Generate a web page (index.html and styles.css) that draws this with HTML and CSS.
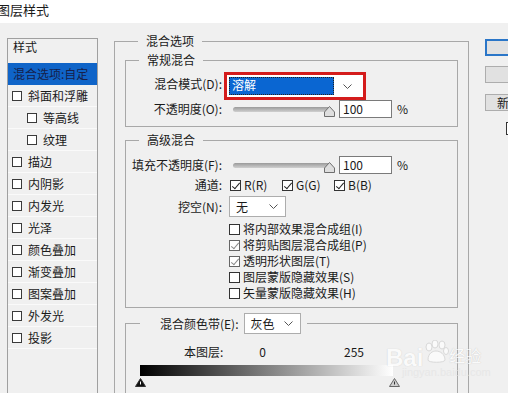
FILE: index.html
```html
<!DOCTYPE html>
<html lang="zh-CN">
<head>
    <meta charset="UTF-8">
    <title>图层样式</title>
    <link rel="stylesheet" href="styles.css">
</head>
<body>
    <div class="titlebar">图层样式</div>
    <div class="dialog">
        <div class="style-list">
            <div class="list-head">样式</div>
            <div class="list-item selected">混合选项:自定</div>
            <div class="list-item"><span class="box"></span>斜面和浮雕</div>
            <div class="list-item sub"><span class="box"></span>等高线</div>
            <div class="list-item sub"><span class="box"></span>纹理</div>
            <div class="list-item"><span class="box"></span>描边</div>
            <div class="list-item"><span class="box"></span>内阴影</div>
            <div class="list-item"><span class="box"></span>内发光</div>
            <div class="list-item"><span class="box"></span>光泽</div>
            <div class="list-item"><span class="box"></span>颜色叠加</div>
            <div class="list-item"><span class="box"></span>渐变叠加</div>
            <div class="list-item"><span class="box"></span>图案叠加</div>
            <div class="list-item"><span class="box"></span>外发光</div>
            <div class="list-item"><span class="box"></span>投影</div>
        </div>

        <fieldset class="group main">
            <legend>混合选项</legend>

            <fieldset class="group normal">
                <legend>常规混合</legend>
                <div class="row">
                    <span class="lbl">混合模式(D):</span>
                    <div class="mark">
                        <div class="select mode">
                            <span class="sel-active">溶解</span>
                            <svg class="chev" width="9" height="5" viewBox="0 0 9 5"><polyline points="0.5,0.5 4.5,4.5 8.5,0.5" fill="none" stroke="#555" stroke-width="1"/></svg>
                        </div>
                    </div>
                </div>
                <div class="row">
                    <span class="lbl">不透明度(O):</span>
                    <div class="slider">
                        <span class="track"></span>
                        <svg class="thumb" width="11" height="11" viewBox="0 0 11 11"><path d="M0.5 10.5 V6 L5.5 0.5 L10.5 6 V10.5 Z" fill="#dedede" stroke="#6e6e6e"/></svg>
                    </div>
                    <div class="num">100</div>
                    <span class="pct">%</span>
                </div>
            </fieldset>

            <fieldset class="group advanced">
                <legend>高级混合</legend>
                <div class="row fill">
                    <span class="lbl">填充不透明度(F):</span>
                    <div class="slider">
                        <span class="track"></span>
                        <svg class="thumb" width="11" height="11" viewBox="0 0 11 11"><path d="M0.5 10.5 V6 L5.5 0.5 L10.5 6 V10.5 Z" fill="#dedede" stroke="#6e6e6e"/></svg>
                    </div>
                    <div class="num">100</div>
                    <span class="pct">%</span>
                </div>
                <div class="row channels">
                    <span class="lbl">通道:</span>
                    <span class="chan first"><span class="cb on"></span>R(R)</span>
                    <span class="chan"><span class="cb on"></span>G(G)</span>
                    <span class="chan"><span class="cb on"></span>B(B)</span>
                </div>
                <div class="row knock">
                    <span class="lbl">挖空(N):</span>
                    <div class="select small">
                        <span class="sel-text">无</span>
                        <svg class="chev" width="9" height="5" viewBox="0 0 9 5"><polyline points="0.5,0.5 4.5,4.5 8.5,0.5" fill="none" stroke="#555" stroke-width="1"/></svg>
                    </div>
                </div>
                <div class="checks">
                    <div class="check"><span class="cb"></span>将内部效果混合成组(I)</div>
                    <div class="check"><span class="cb on grey"></span>将剪贴图层混合成组(P)</div>
                    <div class="check"><span class="cb on grey"></span>透明形状图层(T)</div>
                    <div class="check"><span class="cb"></span>图层蒙版隐藏效果(S)</div>
                    <div class="check"><span class="cb"></span>矢量蒙版隐藏效果(H)</div>
                </div>
            </fieldset>

            <fieldset class="group band">
                <legend>
                    <span class="band-label">混合颜色带(E):</span>
                    <span class="select small">
                        <span class="sel-text">灰色</span>
                        <svg class="chev" width="9" height="5" viewBox="0 0 9 5"><polyline points="0.5,0.5 4.5,4.5 8.5,0.5" fill="none" stroke="#555" stroke-width="1"/></svg>
                    </span>
                </legend>
                <div class="row layer">
                    <span class="layer-lbl">本图层:</span>
                    <span class="layer-min">0</span>
                    <span class="layer-max">255</span>
                </div>
                <div class="ramp"></div>
                <div class="ramp-thumbs">
                    <svg width="11" height="9" viewBox="0 0 11 9"><path d="M0.5 8.5 L5.5 0.5 L10.5 8.5 Z" fill="#111" stroke="#333"/><line x1="5.5" y1="3.5" x2="5.5" y2="6.5" stroke="#fff"/></svg>
                    <svg width="11" height="9" viewBox="0 0 11 9"><path d="M0.5 8.5 L5.5 0.5 L10.5 8.5 Z" fill="#cfcfcf" stroke="#666"/><line x1="5.5" y1="3.5" x2="5.5" y2="6.5" stroke="#333"/></svg>
                </div>
            </fieldset>
        </fieldset>

        <div class="buttons">
            <div class="btn default"></div>
            <div class="btn"></div>
            <div class="btn">新建样式(W)...</div>
            <span class="cb preview"></span>
        </div>
    </div>

    <div class="watermark">
        <span class="wm-bai">Bai</span><svg class="wm-paw" width="26" height="24" viewBox="0 0 26 24"><g fill="#fff" stroke="#cfcfcf"><ellipse cx="6" cy="7" rx="3" ry="4"/><ellipse cx="12" cy="4" rx="3" ry="4"/><ellipse cx="19" cy="5" rx="3" ry="4"/><ellipse cx="23" cy="11" rx="2.5" ry="3.5"/><path d="M5 20 C5 13 10 11 13 11 C17 11 22 14 22 20 C22 23 5 23 5 20 Z"/></g></svg><span class="wm-jy">经验</span>
        <div class="wm-url">jingyan.baidu.com</div>
    </div>
</body>
</html>
```

FILE: styles.css
```css
* {
    box-sizing: border-box;
}

body {
    margin: 0;
    width: 508px;
    height: 393px;
    overflow: hidden;
    position: relative;
    background-color: #f0f0f0;
    font-family: "Noto Sans CJK SC", "Microsoft YaHei", sans-serif;
    font-size: 12px;
    line-height: 16px;
    color: #1a1a1a;
}

.titlebar {
    height: 23px;
    background-color: #fff;
    font-size: 13px;
    line-height: 20px;
    text-indent: -3px;
}

.dialog {
    display: flex;
    align-items: flex-start;
    height: 370px;
    overflow: hidden;
    padding: 10px 0 0 7px;
}

/* left list of effects */
.style-list {
    flex: none;
    width: 91px;
    height: 356px;
    margin-top: 5px;
    border: 1px solid #a0a0a0;
}

.list-head {
    height: 24px;
    padding-left: 5px;
    line-height: 16px;
}

.list-item {
    display: flex;
    align-items: center;
    height: 22px;
    padding-left: 4px;
    border-bottom: 1px solid #fafafa;
    white-space: nowrap;
}

.list-item.sub {
    padding-left: 19px;
}

.list-item.selected {
    background-color: #0f64c8;
    color: #16204a;
    padding-left: 5px;
    border-bottom: none;
}

.box {
    width: 10px;
    height: 10px;
    margin-right: 6px;
    border: 1px solid #3a3a3a;
    background-color: #fff;
}

/* group boxes */
.group {
    margin: 0;
    padding: 0;
    min-width: 0;
    border: 1px solid #a8a8a8;
}

.group legend {
    margin-left: 13px;
    padding: 0 8px;
    line-height: 16px;
}

.main {
    flex: none;
    width: 355px;
    height: 362px;
    margin-left: 16px;
    padding: 3px 10px 0;
}

.normal {
    padding-bottom: 8px;
}

.advanced {
    margin-top: 5px;
    padding-bottom: 6px;
}

.band {
    margin-top: 5px;
    height: 120px;
}

.band legend {
    display: flex;
    align-items: center;
    margin-left: 14px;
    padding: 0 6px 0 20px;
}

.band-label {
    margin-right: 5px;
}

.row {
    display: flex;
    align-items: center;
    white-space: nowrap;
}

.lbl {
    width: 96px;
    text-align: right;
}

.mark {
    margin: 4px 0 0 2px;
    width: 142px;
    height: 28px;
    padding: 1px;
    border: 3px solid #d41c1c;
    background-color: #fff;
}

.select {
    display: flex;
    align-items: center;
    background-color: #fff;
    border: 1px solid #adadad;
}

.select.mode {
    height: 20px;
    border: none;
    padding: 1px;
}

.sel-active {
    flex: 1;
    height: 100%;
    padding-left: 3px;
    line-height: 16px;
    color: #fff;
    background-color: #0a66d2;
    outline: 1px dotted #222;
    outline-offset: -1px;
}

.select.mode .chev {
    margin: 0 9px 0 9px;
}

.select.small {
    width: 57px;
    height: 21px;
    padding-left: 6px;
}

.sel-text {
    flex: 1;
}

.select.small .chev {
    margin-right: 7px;
}

.slider {
    display: flex;
    align-items: center;
    margin-left: 11px;
}

.track {
    width: 97px;
    height: 5px;
    border-radius: 3px;
    background: linear-gradient(#9a9a9a, #d0d0d0);
}

.thumb {
    margin: 4px 0 0 -6px;
}

.num {
    width: 53px;
    height: 18px;
    margin-left: 4px;
    padding-left: 3px;
    line-height: 16px;
    background-color: #fff;
    border: 1px solid #7a7a7a;
}

.pct {
    margin-left: 5px;
}

.fill {
    margin-top: 8px;
}

.channels {
    margin-top: 3px;
}

.chan {
    display: flex;
    align-items: center;
    width: 52px;
}

.chan.first {
    margin-left: 8px;
}

.cb {
    position: relative;
    flex: none;
    width: 11px;
    height: 11px;
    margin-right: 3px;
    border: 1px solid #333;
    background-color: #fff;
}

.cb.on::after {
    content: "";
    position: absolute;
    left: 3px;
    top: 0;
    width: 3px;
    height: 7px;
    border: solid #222;
    border-width: 0 1px 1px 0;
    transform: rotate(40deg);
}

.cb.grey {
    border-color: #666;
}

.cb.grey::after {
    border-color: #8a8a8a;
}

.knock {
    margin-top: 3px;
}

.knock .select {
    margin-left: 7px;
}

.checks {
    margin: 4px 0 0 103px;
}

.check {
    display: flex;
    align-items: center;
    height: 16px;
    white-space: nowrap;
}

.layer {
    margin-top: 10px;
}

.layer-lbl {
    margin-left: 58px;
}

.layer-min {
    margin-left: 36px;
}

.layer-max {
    margin-left: 78px;
}

.ramp {
    width: 253px;
    height: 11px;
    margin: 5px 0 0 14px;
    background: linear-gradient(to right, #000, #fff);
}

.ramp-thumbs {
    display: flex;
    justify-content: space-between;
    width: 265px;
    margin: 2px 0 0 9px;
}

/* right buttons */
.buttons {
    flex: none;
    display: flex;
    flex-direction: column;
    margin: 6px 0 0 16px;
}

.btn {
    width: 80px;
    height: 17px;
    margin-bottom: 11px;
    padding-left: 11px;
    line-height: 15px;
    background-color: #e1e1e1;
    border: 1px solid #adadad;
    white-space: nowrap;
}

.btn.default {
    border: 2px solid #2a76c8;
    margin-bottom: 10px;
}

.cb.preview {
    width: 13px;
    height: 13px;
    margin: 0 0 0 21px;
}

/* baidu watermark over the page */
.watermark {
    position: absolute;
    left: 386px;
    top: 340px;
    opacity: 0.7;
    white-space: nowrap;
}

.wm-bai {
    font-family: "Liberation Sans", sans-serif;
    font-size: 24px;
    font-weight: bold;
    color: #fff;
    text-shadow: 0 0 1px #bbb;
    vertical-align: -4px;
}

.wm-paw {
    vertical-align: -2px;
}

.wm-jy {
    font-size: 16px;
    color: #fff;
    text-shadow: 0 0 1px #aaa;
}

.wm-url {
    font-family: "Liberation Sans", sans-serif;
    font-size: 11px;
    line-height: 12px;
    color: #e4e4e4;
    margin-left: 16px;
}
```
